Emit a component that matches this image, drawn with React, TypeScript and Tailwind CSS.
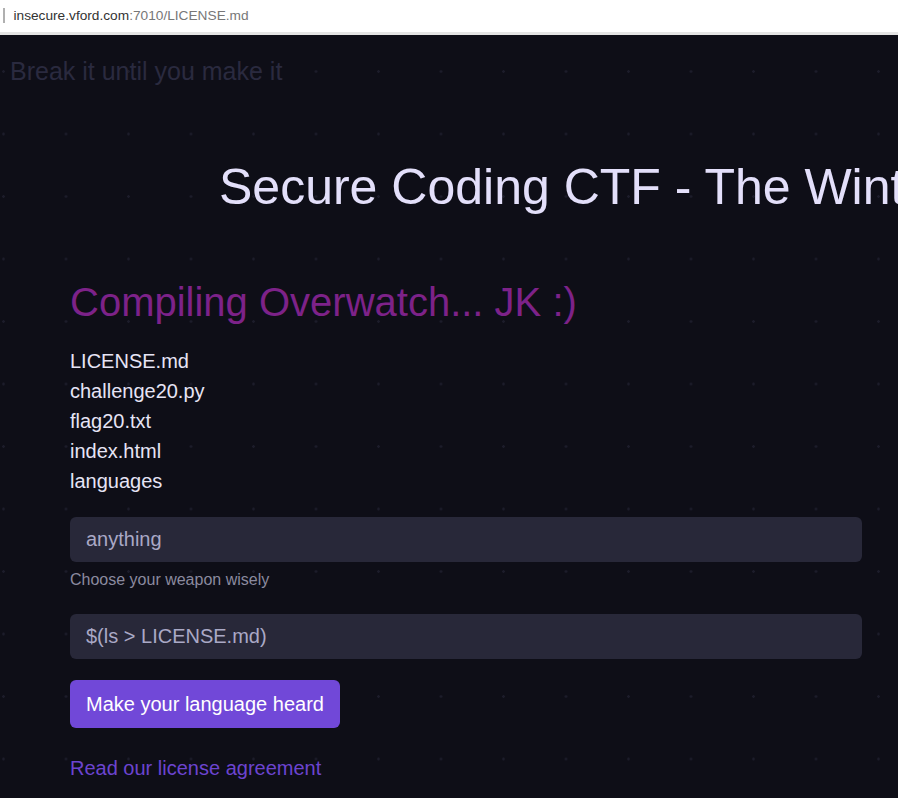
import React from 'react';

const files = ['LICENSE.md', 'challenge20.py', 'flag20.txt', 'index.html', 'languages'];

const App = () => {
  return (
    <div className="min-h-screen w-[898px] overflow-hidden bg-[#0e0e17]" style={{ fontFamily: '"Liberation Sans", Arial, sans-serif' }}>
      {/* browser address bar */}
      <div className="flex h-[35px] items-center border-b-[3px] border-[#e4e4e4] bg-white pb-[1px]">
        <span className="ml-[3px] h-[15px] w-[1.5px] bg-[#b0b0b0]" />
        <span className="ml-[9px] text-[13.7px] leading-none text-[#333]">
          insecure.vford.com<span className="text-[#777]">:7010/LICENSE.md</span>
        </span>
      </div>

      <main className="relative h-[763px] bg-[radial-gradient(circle,#1c1c2a_1px,transparent_1.6px)] bg-[size:62.5px_62.5px] bg-[position:-27.75px_5.25px] pt-[21px]">
        <p className="pl-[10px] text-[25px] leading-[30px] text-[#2a2a3f]">Break it until you make it</p>

        <h1 className="mt-[71px] overflow-hidden whitespace-nowrap pl-[219px] text-[50px] leading-[60px] text-[#e3dffa]">
          Secure Coding CTF - The Winter Edition
        </h1>

        <section className="ml-[70px] mt-[61px] w-[792px]">
          <h2 className="text-[40px] leading-[48px] text-[#7d2289]">Compiling Overwatch... JK :)</h2>

          <ul className="mt-[20px] text-[20px] leading-[30px] text-[#e6e4f5]">
            {files.map((f) => (
              <li key={f}>{f}</li>
            ))}
          </ul>

          <form className="mt-[21px] flex flex-col" onSubmit={(e) => e.preventDefault()}>
            <input
              defaultValue="anything"
              className="h-[45px] w-full rounded-md bg-[#282839] px-4 text-[20px] text-[#aaa9c6] outline-none"
            />
            <p className="mt-[6px] text-[16px] leading-[24px] text-[#8b8a9f]">Choose your weapon wisely</p>
            <input
              defaultValue="$(ls > LICENSE.md)"
              className="mt-[22px] h-[45px] w-full rounded-md bg-[#282839] px-4 text-[20px] text-[#aaa9c6] outline-none"
            />
            <div className="mt-[21px]">
              <button type="submit" className="h-[48px] rounded-md bg-[#7148d8] px-4 text-[20px] text-white">
                Make your language heard
              </button>
            </div>
          </form>

          <a href="#" className="mt-[25px] block text-[20px] leading-[30px] text-[#6c44d0]">
            Read our license agreement
          </a>
        </section>
      </main>
    </div>
  );
};

export default App;
